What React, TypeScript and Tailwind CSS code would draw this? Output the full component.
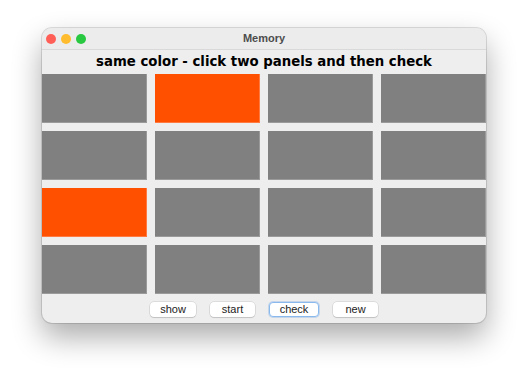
import React from "react";

const cells = [
  "g", "o", "g", "g",
  "g", "g", "g", "g",
  "o", "g", "g", "g",
  "g", "g", "g", "g",
];

export default function App() {
  return (
    <div className="w-[528px] h-[380px] bg-white overflow-hidden pt-[28px] pl-[42px]">
      <div className="w-[444px] h-[295px] rounded-[10px] bg-[#eeeeee] flex flex-col overflow-hidden shadow-[0_14px_30px_rgba(0,0,0,0.33),0_0_0_1px_rgba(0,0,0,0.12)]">
        <div className="relative h-[22px] shrink-0 bg-[#ececec] border-b border-[#d9d9d9] flex items-center justify-center">
          <div className="absolute left-[4px] top-[6px] flex gap-[5px]">
            <div className="w-[10px] h-[10px] rounded-full bg-[#ff5f57]" />
            <div className="w-[10px] h-[10px] rounded-full bg-[#febc2e]" />
            <div className="w-[10px] h-[10px] rounded-full bg-[#28c840]" />
          </div>
          <span className="text-[11px] font-bold text-[#4d4d4d] leading-none" style={{ fontFamily: '"Liberation Sans", Arial, sans-serif' }}>
            Memory
          </span>
        </div>
        <div className="h-[24px] shrink-0 flex items-center justify-center">
          <span className="text-[13.3px] font-bold text-black leading-none" style={{ fontFamily: '"DejaVu Sans", Verdana, sans-serif' }}>
            same color - click two panels and then check
          </span>
        </div>
        <div className="grid grid-cols-4 grid-rows-4 gap-[8px] h-[220px] shrink-0">
          {cells.map((c, i) => (
            <div
              key={i}
              className={
                c === "o"
                  ? "bg-[#ff5000] border-b border-r border-[#ff7a40]"
                  : "bg-[#808080] border-b border-r border-[#9a9a9a]"
              }
            />
          ))}
        </div>
        <div className="flex-1 flex justify-center items-start pt-[8px] gap-[14px]" style={{ fontFamily: '"Liberation Sans", Arial, sans-serif' }}>
          <button className="w-[46px] h-[15px] rounded-[4px] bg-white text-[11px] leading-none text-[#222] shadow-[0_0_0_0.5px_rgba(0,0,0,0.15),0_1px_1px_rgba(0,0,0,0.12)]">show</button>
          <button className="w-[45px] h-[15px] rounded-[4px] bg-white text-[11px] leading-none text-[#222] shadow-[0_0_0_0.5px_rgba(0,0,0,0.15),0_1px_1px_rgba(0,0,0,0.12)]">start</button>
          <button className="w-[50px] h-[15px] rounded-[4px] bg-white text-[11px] leading-none text-[#222] border border-[#8ab9ee] shadow-[0_0_0_1px_rgba(120,170,230,0.35)]">check</button>
          <button className="w-[45px] h-[15px] rounded-[4px] bg-white text-[11px] leading-none text-[#222] shadow-[0_0_0_0.5px_rgba(0,0,0,0.15),0_1px_1px_rgba(0,0,0,0.12)]">new</button>
        </div>
      </div>
    </div>
  );
}
